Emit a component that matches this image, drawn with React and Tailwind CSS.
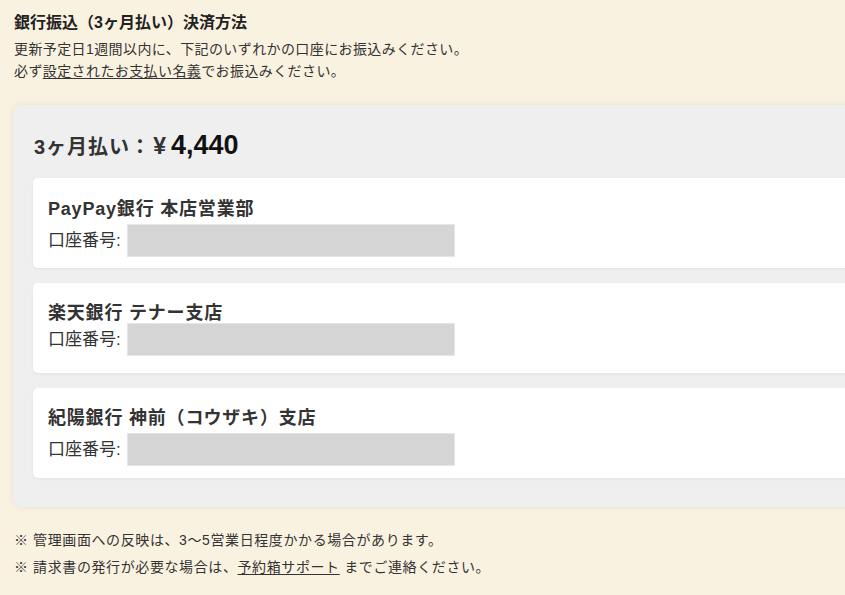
import React from "react";

const font = { fontFamily: '"Liberation Sans", "Noto Sans CJK JP", sans-serif' };

function BankCard({ name, boxClass, titleClass }) {
  return (
    <div className="h-[90px] bg-white rounded-[5px] shadow-[0_1px_3px_rgba(0,0,0,0.06)] pl-[15px] pt-[20px]">
      <div className={"text-[18px] leading-[22px] font-bold text-[#333] tracking-[0.8px] " + titleClass}>{name}</div>
      <div className={"flex items-center " + boxClass}>
        <span className="text-[17px] leading-[33px] text-[#333] w-[79px]">口座番号:</span>
        <div className="w-[328px] h-[33px] bg-[#d5d5d5] border border-[#e6e6e6]" />
      </div>
    </div>
  );
}

export default function App() {
  return (
    <div className="w-full min-h-[595px] bg-[#faf2e1] overflow-hidden" style={font}>
      <div className="pl-[14px] pt-[11px]">
        <div className="text-[16px] leading-[24px] font-bold text-[#222]">銀行振込（3ヶ月払い）決済方法</div>
        <div className="mt-[3px] text-[14px] leading-[22px] text-[#333] tracking-[0.4px]">
          <div>更新予定日1週間以内に、下記のいずれかの口座にお振込みください。</div>
          <div>
            必ず<span className="underline underline-offset-2">設定されたお支払い名義</span>でお振込みください。
          </div>
        </div>
      </div>

      <div className="mt-[23px] ml-[13px] mr-[-30px] bg-[#efefef] rounded-[8px] shadow-[0_0_6px_rgba(0,0,0,0.08)] pt-[20px] pb-[29px] pl-[20px] pr-[20px]">
        <div className="flex items-baseline h-[30px] pl-[1px] text-[#333]">
          <span className="text-[20px] font-bold leading-[30px] tracking-[1px]">3ヶ月払い：</span>
          <span className="text-[23px] font-bold ml-[2px]">¥</span>
          <span className="text-[27px] font-bold text-[#111] ml-[5px]">4,440</span>
        </div>
        <div className="mt-[23px] flex flex-col gap-[15px]">
          <BankCard name="PayPay銀行 本店営業部" titleClass="" boxClass="mt-[4px]" />
          <BankCard name="楽天銀行 テナー支店" titleClass="-mt-[1px]" boxClass="-mt-[1px]" />
          <BankCard name="紀陽銀行 神前（コウザキ）支店" titleClass="-mt-[1px]" boxClass="mt-[4px]" />
        </div>
      </div>

      <div className="pl-[14px] mt-[20px] text-[14px] leading-[27px] text-[#333] tracking-[0.6px]">
        <div>※ 管理画面への反映は、3〜5営業日程度かかる場合があります。</div>
        <div>
          ※ 請求書の発行が必要な場合は、<span className="underline underline-offset-2">予約箱サポート</span> までご連絡ください。
        </div>
      </div>
    </div>
  );
}
